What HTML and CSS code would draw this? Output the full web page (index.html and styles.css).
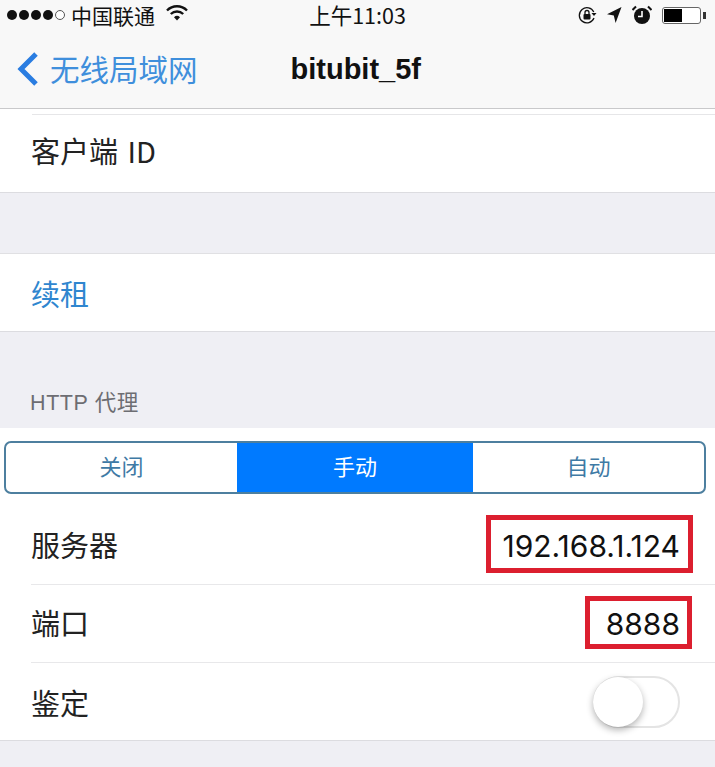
FILE: index.html
```html
<!DOCTYPE html>
<html lang="zh">
<head>
<meta charset="utf-8">
<title>bitubit_5f</title>
<link rel="stylesheet" href="styles.css">
</head>
<body>
<div class="page">
  <header class="top">
    <div class="status">
      <div class="status-left">
        <span class="signal"><i></i><i></i><i></i><i></i><i class="off"></i></span>
        <span class="carrier">中国联通</span>
        <svg class="wifi" width="22" height="16" viewBox="0 0 22 16"><path d="M1 5.500a14 14 0 0 1 20 0" fill="none" stroke="#111" stroke-width="2.400"/><path d="M4.800 9a9 9 0 0 1 12.400 0" fill="none" stroke="#111" stroke-width="2.400"/><path d="M8 12.200a4.500 4.500 0 0 1 6 0L11 15.600z" fill="#111"/></svg>
      </div>
      <div class="clock">上午11:03</div>
      <div class="status-right">
        <svg width="20" height="20" viewBox="0 0 20 20"><path d="M16.800 7A7.600 7.600 0 1 0 17 13" fill="none" stroke="#111" stroke-width="1.300"/><path d="M14.500 8h5l-2.500 3z" fill="#111"/><rect x="6.500" y="9" width="7" height="5.500" rx="1" fill="#111"/><path d="M8 9V7.500a2 2 0 0 1 4 0V9" fill="none" stroke="#111" stroke-width="1.300"/></svg>
        <svg class="loc" width="16" height="18" viewBox="0 0 16 18"><path d="M15.500 1L1 8.200l6.800 1.200L9.600 17z" fill="#111"/></svg>
        <svg class="alarm" width="20" height="20" viewBox="0 0 20 20"><circle cx="10" cy="11" r="8" fill="#111"/><path d="M10 6v5.500H6" fill="none" stroke="#fff" stroke-width="1.600"/><path d="M0.500 5L4 1.500M19.500 5L16 1.500" stroke="#111" stroke-width="2"/></svg>
        <div class="battery"><div class="charge"></div></div><div class="nub"></div>
      </div>
    </div>
    <nav class="nav">
      <div class="back">
        <svg width="24" height="36" viewBox="0 0 24 36"><path d="M20 3L5 18l15 15" fill="none" stroke="#2a7de1" stroke-width="5"/></svg>
        <span>无线局域网</span>
      </div>
      <div class="title">bitubit_5f</div>
    </nav>
  </header>

  <div class="group first">
    <div class="peek"></div>
    <div class="row row-client"><span class="label spaced">客户端 ID</span></div>
  </div>

  <div class="spacer-60"></div>

  <div class="group">
    <div class="row"><span class="label link">续租</span></div>
  </div>

  <div class="section-title">HTTP 代理</div>

  <section class="proxy">
    <div class="segmented">
      <div class="seg">关闭</div>
      <div class="seg active">手动</div>
      <div class="seg">自动</div>
    </div>
    <div class="row inset">
      <span class="label">服务器</span>
      <span class="value">192.168.1.124<span class="mark mark-server"></span></span>
    </div>
    <div class="row inset">
      <span class="label">端口</span>
      <span class="value">8888<span class="mark mark-port"></span></span>
    </div>
    <div class="row">
      <span class="label">鉴定</span>
      <span class="switch"><span class="knob"></span></span>
    </div>
  </section>
</div>
</body>
</html>
```
FILE: styles.css
```css
* { box-sizing: border-box; }
html, body { margin: 0; padding: 0; }
body { background: #efeff4; font-family: "Noto Sans CJK SC", "Liberation Sans", sans-serif; color: #111; }
.page { width: 715px; height: 767px; overflow: hidden; }

.top { height: 109px; background: #f8f8f8; border-bottom: 1px solid #c9c9cb; }
.status { height: 30px; padding: 0 9px 0 7px; display: grid; grid-template-columns: 1fr auto 1fr; align-items: center; }
.status-left { display: flex; align-items: center; }
.signal { display: flex; gap: 2px; }
.signal i { width: 10px; height: 10px; border-radius: 50%; background: #111; }
.signal i.off { background: #fff; border: 1px solid #555; }
.carrier { margin-left: 6px; font-size: 21px; line-height: 28px; width: 84px; }
.wifi { margin-left: 11px; margin-top: -4px; }
.clock { font-size: 21.500px; line-height: 26px; margin: 0 0 0 2px; }
.status-right { display: flex; align-items: center; justify-content: flex-end; }
.loc { margin-left: 9px; }
.alarm { margin-left: 10px; }
.battery { margin-left: 10px; width: 39px; height: 17px; border: 1px solid #666; border-radius: 3px; background: #fff; padding: 1px; }
.charge { width: 18px; height: 100%; background: #000; }
.nub { width: 3px; height: 7px; margin-left: 2px; background: #333; }

.nav { height: 78px; padding: 0 0 0 16px; display: flex; align-items: center; }
.back { display: flex; align-items: center; color: #3f8fdc; font-size: 29.500px; line-height: 40px; }
.back span { margin-left: 10px; margin-top: -2px; }
.title { margin-left: 93px; font-family: "Liberation Sans", sans-serif; font-weight: 700; font-size: 29px; color: #111; }

.group { background: #fff; border-top: 1px solid #e0e0e3; border-bottom: 1px solid #dcdce0; }
.group.first { border-top: 0; }
.peek { height: 6px; margin-left: 32px; border-bottom: 1px solid #e6e6e8; }
.row { height: 77px; padding: 0 35px 0 31px; display: flex; align-items: center; justify-content: space-between; background: #fff; }
.row-client { padding-bottom: 7px; }
.label { font-size: 29px; line-height: 40px; color: #222; }
.spaced { word-spacing: 3px; }
.link { color: #2f86cf; }
.spacer-60 { height: 60px; }

.section-title { height: 96px; padding: 55px 0 0 30px; font-size: 21.500px; line-height: 32px; color: #6d6d72; font-family: "Liberation Sans", "Noto Sans CJK SC", sans-serif; letter-spacing: 0.6px; }

.proxy { background: #fff; padding-top: 13px; border-bottom: 1px solid #dcdce0; }
.segmented { margin: 0 9px 13px 4px; height: 53px; display: flex; border: 2px solid #4d7f9f; border-radius: 7px; overflow: hidden; }
.seg { width: 232px; flex: 1 1 auto; display: flex; align-items: center; justify-content: center; font-size: 22px; color: #3f7aa5; padding-bottom: 5px; }
.seg.active { flex: 0 0 236px; background: #007aff; color: #fff; margin: -2px 0; }
.inset { position: relative; }
.inset::after { content: ""; position: absolute; left: 31px; right: 0; bottom: 0; height: 1px; background: #e8e8ea; }
.row.inset { height: 78px; }
.inset .label { margin-bottom: 4px; }
.value { position: relative; font-family: Inter, "Liberation Sans", sans-serif; font-size: 30px; line-height: 40px; color: #111; }
.mark { position: absolute; border: 5px solid #dc1f2f; }
.mark-server { left: -16px; right: -13px; top: -11px; bottom: -7px; }
.mark-port { left: -21px; right: -12px; top: -8px; bottom: -5px; }

.switch { position: relative; width: 87px; height: 52px; border: 2px solid #e4e4e4; border-radius: 26px; background: #fff; }
.knob { position: absolute; left: -2px; top: -1px; width: 50px; height: 50px; border-radius: 50%; background: #fff; box-shadow: 0 3px 7px rgba(0,0,0,.3); }
```
